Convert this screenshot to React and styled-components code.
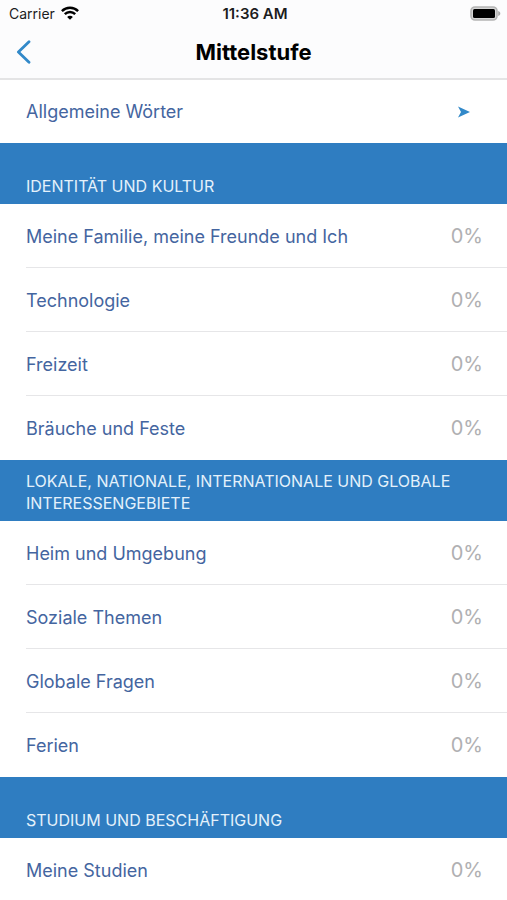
import React from "react";
import styled, { createGlobalStyle } from "styled-components";

const sections = [
  {
    title: "Identität und Kultur",
    topics: [
      { name: "Meine Familie, meine Freunde und Ich", progress: 0 },
      { name: "Technologie", progress: 0 },
      { name: "Freizeit", progress: 0 },
      { name: "Bräuche und Feste", progress: 0 },
    ],
  },
  {
    title: "Lokale, nationale, internationale und globale Interessengebiete",
    topics: [
      { name: "Heim und Umgebung", progress: 0 },
      { name: "Soziale Themen", progress: 0 },
      { name: "Globale Fragen", progress: 0 },
      { name: "Ferien", progress: 0 },
    ],
  },
  {
    title: "Studium und Beschäftigung",
    topics: [{ name: "Meine Studien", progress: 0 }],
  },
];

const WifiIcon = () => (
  <svg width="18" height="14" viewBox="0 0 18 14" aria-hidden="true">
    <g fill="none" stroke="#000" strokeWidth="2.4">
      <path d="M0.9 5.1C5.4 0.6 12.6 0.6 17.1 5.1" />
      <path d="M3.8 8.2C6.7 5.3 11.3 5.3 14.2 8.2" />
    </g>
    <path d="M9 13.8L6.1 10.9C7.7 9.3 10.3 9.3 11.9 10.9Z" fill="#000" />
  </svg>
);

const BatteryIcon = () => (
  <svg width="31" height="15" viewBox="0 0 31 15" aria-hidden="true">
    <rect x="1" y="1" width="26" height="13" rx="4" fill="#d6d6d6" stroke="#b4b4b4" strokeWidth="1.6" />
    <rect x="3" y="3" width="22" height="9" rx="1.5" fill="#000" />
    <path d="M28.2 5C31 5.8 31 9.2 28.2 10Z" fill="#a8a8a8" />
  </svg>
);

const BackIcon = () => (
  <svg width="15" height="24" viewBox="0 0 15 24" aria-hidden="true">
    <path
      d="M13 1.8L2.4 12L13 22.2"
      fill="none"
      stroke="#3289c9"
      strokeWidth="2.8"
      strokeLinecap="round"
      strokeLinejoin="round"
    />
  </svg>
);

const ArrowIcon = () => (
  <svg width="12" height="12" viewBox="0 0 12 12" aria-hidden="true">
    <path d="M0 0.4L12 6L0 11.6L3 6Z" fill="#3289c9" />
  </svg>
);

const App = () => {
  return (
    <>
      <GlobalStyle />
      <Screen>
        <Header>
          <StatusBar>
            <Carrier>
              Carrier
              <WifiIcon />
            </Carrier>
            <Time>11:36 AM</Time>
            <Battery>
              <BatteryIcon />
            </Battery>
          </StatusBar>
          <NavBar>
            <BackButton type="button" aria-label="Zurück">
              <BackIcon />
            </BackButton>
            <Title>Mittelstufe</Title>
          </NavBar>
        </Header>
        <Content>
          <Row href="#allgemein" $compact>
            <RowBody>
              <span>Allgemeine Wörter</span>
              <Arrow>
                <ArrowIcon />
              </Arrow>
            </RowBody>
          </Row>
          {sections.map((section) => (
            <section key={section.title}>
              <SectionTitle>{section.title}</SectionTitle>
              <List>
                {section.topics.map((topic, index) => (
                  <li key={topic.name}>
                    <Row href="#thema">
                      <RowBody $divider={index < section.topics.length - 1}>
                        <span>{topic.name}</span>
                        <Progress>{topic.progress}%</Progress>
                      </RowBody>
                    </Row>
                  </li>
                ))}
              </List>
            </section>
          ))}
        </Content>
      </Screen>
    </>
  );
};

const GlobalStyle = createGlobalStyle`
  * {
    box-sizing: border-box;
  }
  body {
    margin: 0;
    background: #fff;
    font-family: Inter, "Liberation Sans", sans-serif;
  }
`;
const Screen = styled.div`
  display: flex;
  flex-direction: column;
  height: 100vh;
`;
const Header = styled.header`
  flex: none;
  background: #fcfcfd;
  border-bottom: 2px solid #e4e4e5;
`;
const StatusBar = styled.div`
  display: grid;
  grid-template-columns: 1fr auto 1fr;
  align-items: center;
  height: 26px;
  padding: 0 6px 0 9px;
  font-size: 14px;
  color: #1c1c1e;
`;
const Carrier = styled.div`
  display: flex;
  align-items: center;
  gap: 6px;
`;
const Time = styled.time`
  font-size: 15px;
  font-weight: 600;
`;
const Battery = styled.div`
  display: flex;
  justify-content: flex-end;
`;
const NavBar = styled.div`
  display: grid;
  grid-template-columns: 48px 1fr 48px;
  align-items: center;
  height: 52px;
`;
const BackButton = styled.button`
  display: flex;
  align-items: center;
  height: 48px;
  padding: 0 16px;
  border: none;
  background: none;
  cursor: pointer;
`;
const Title = styled.h1`
  margin: 0;
  font-size: 22px;
  font-weight: 700;
  line-height: 28px;
  text-align: center;
  color: #000;
`;
const Content = styled.main`
  flex: 1;
  min-height: 0;
  overflow-y: auto;
  scrollbar-width: none;
`;
const List = styled.ul`
  margin: 0;
  padding: 0;
  list-style: none;
`;
const Row = styled.a`
  display: flex;
  height: ${({ $compact }) => ($compact ? 63 : 64)}px;
  padding-left: 26px;
  font-size: 18px;
  color: #4465a0;
  text-decoration: none;
`;
const RowBody = styled.div`
  display: flex;
  flex: 1;
  align-items: center;
  justify-content: space-between;
  padding: 1px 24px 0 0;
  border-bottom: 1px solid ${({ $divider }) => ($divider ? "#e6e6e8" : "transparent")};
`;
const Arrow = styled.span`
  display: flex;
  padding-right: 13px;
`;
const Progress = styled.span`
  font-size: 20px;
  color: #b0b0b2;
`;
const SectionTitle = styled.h2`
  display: flex;
  align-items: flex-end;
  min-height: 61px;
  margin: 0;
  padding: 10px 26px 7px;
  background: #2f7dc1;
  font-size: 16px;
  font-weight: 400;
  line-height: 22px;
  text-transform: uppercase;
  color: #e4f1fb;
`;

export default App;
